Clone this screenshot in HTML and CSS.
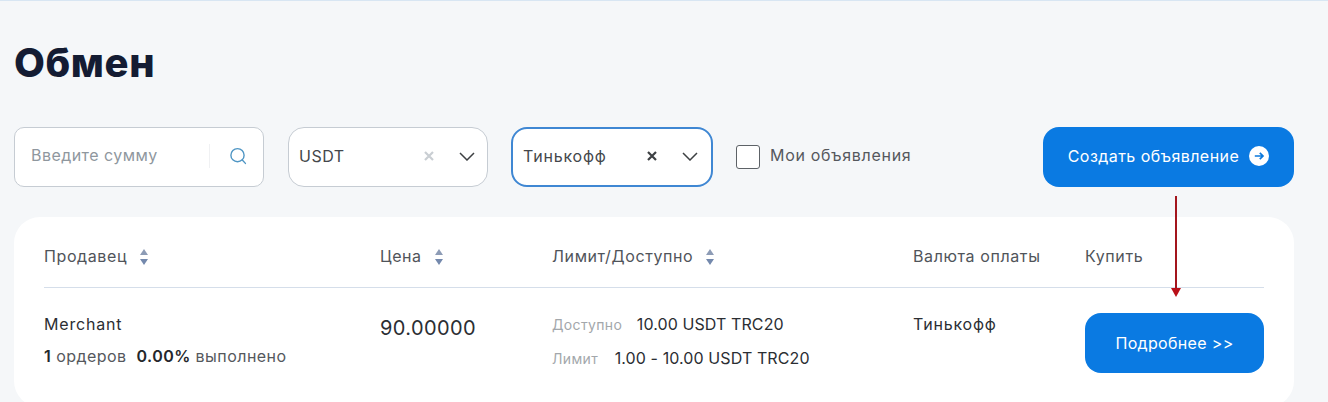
FILE: index.html
```html
<!DOCTYPE html>
<html lang="ru">
<head>
    <meta charset="UTF-8">
    <meta name="viewport" content="width=device-width, initial-scale=1.0">
    <title>Обмен</title>
    <link rel="stylesheet" href="styles.css">
</head>
<body>
    <main class="page">
        <h1 class="title">Обмен</h1>

        <!-- Фильтры -->
        <div class="filters">
            <div class="field field-search">
                <span class="placeholder">Введите сумму</span>
                <span class="search-sep"></span>
                <svg class="search-icon" width="18" height="18" viewBox="0 0 18 18" fill="none" stroke="#4f96c4" stroke-width="1.4">
                    <circle cx="8.5" cy="8.2" r="6.6"/>
                    <path d="M13.3 13 16.4 16.4" stroke-linecap="round"/>
                </svg>
            </div>

            <div class="field field-select field-usdt">
                <span class="select-value">USDT</span>
                <svg class="clear-icon" width="10" height="10" viewBox="0 0 10 10" stroke="#c9ced3" stroke-width="2.2">
                    <path d="M1 1 9 9M9 1 1 9"/>
                </svg>
                <svg class="chevron" width="16" height="9" viewBox="0 0 16 9" fill="none" stroke="#3d4043" stroke-width="1.5">
                    <path d="M1 1 8 8 15 1"/>
                </svg>
            </div>

            <div class="field field-select field-bank">
                <span class="select-value">Тинькофф</span>
                <svg class="clear-icon" width="10" height="10" viewBox="0 0 10 10" stroke="#3d4043" stroke-width="2.2">
                    <path d="M1 1 9 9M9 1 1 9"/>
                </svg>
                <svg class="chevron" width="16" height="9" viewBox="0 0 16 9" fill="none" stroke="#3d4043" stroke-width="1.5">
                    <path d="M1 1 8 8 15 1"/>
                </svg>
            </div>

            <label class="check">
                <span class="check-box"></span>
                <span class="check-label">Мои объявления</span>
            </label>

            <button class="btn btn-create">
                Создать объявление
                <svg width="20" height="20" viewBox="0 0 20 20">
                    <circle cx="10" cy="10" r="10" fill="#fff"/>
                    <path d="M5.8 10H14M10.8 6.8 14 10 10.8 13.2" fill="none" stroke="#0b78dc" stroke-width="1.7"/>
                </svg>
            </button>
        </div>

        <!-- Таблица объявлений -->
        <section class="card">
            <div class="row row-head">
                <div class="cell">Продавец <span class="sort"></span></div>
                <div class="cell">Цена <span class="sort"></span></div>
                <div class="cell">Лимит/Доступно <span class="sort"></span></div>
                <div class="cell">Валюта оплаты</div>
                <div class="cell">Купить</div>
            </div>
            <div class="row row-body">
                <div class="cell seller">
                    <div class="seller-name">Merchant</div>
                    <div class="seller-stats"><b>1</b> ордеров <b class="stats-gap">0.00%</b> выполнено</div>
                </div>
                <div class="cell price">90.00000</div>
                <div class="cell limits">
                    <div class="limit-line"><span class="limit-label">Доступно</span> 10.00 USDT TRC20</div>
                    <div class="limit-line"><span class="limit-label">Лимит</span> 1.00 - 10.00 USDT TRC20</div>
                </div>
                <div class="cell bank">Тинькофф</div>
                <div class="cell">
                    <button class="btn btn-more">Подробнее &gt;&gt;</button>
                </div>
            </div>
        </section>

        <!-- Красная стрелка поверх страницы -->
        <svg class="arrow" width="12" height="102" viewBox="0 0 12 102">
            <path d="M6 0V93" stroke="#a3151d" stroke-width="2"/>
            <path d="M1 92H11L6 101Z" fill="#b90f18"/>
        </svg>
    </main>
</body>
</html>
```

FILE: styles.css
```css
* {
    box-sizing: border-box;
}

html, body {
    height: 100%;
}

body {
    margin: 0;
    overflow: hidden;
    background-color: #f5f7f9;
    border-top: 1px solid #d8e6f3;
    font-family: Inter, "Open Sans", sans-serif;
    color: #2b2e33;
}

.page {
    position: relative;
    padding: 0 34px 0 14px;
}

.title {
    margin: 0;
    padding-top: 39px;
    height: 126px;
    font-size: 40px;
    line-height: 46px;
    font-weight: 800;
    letter-spacing: 0.6px;
    color: #141c33;
}

.filters {
    display: flex;
    align-items: center;
    height: 60px;
}

.field {
    display: flex;
    align-items: center;
    height: 60px;
    padding-bottom: 2px;
    background: #fff;
    border: 1px solid #c6ccd3;
}

.field-search {
    width: 250px;
    padding: 0 16px 2px 16px;
    border-radius: 10px;
}

.placeholder {
    flex: 1;
    padding-bottom: 2px;
    font-size: 16px;
    letter-spacing: 0.45px;
    color: #8f979e;
}

.search-sep {
    width: 1px;
    height: 24px;
    margin-right: 19px;
    background: #f0f1f3;
}

.field-select {
    border-radius: 16px;
    font-size: 16px;
    color: #44474b;
}

.field-usdt {
    width: 200px;
    margin-left: 24px;
    padding: 0 12px 2px 10px;
}

.field-bank {
    width: 202px;
    margin-left: 23px;
    padding: 0 13px 2px 10px;
    border: 2px solid #3f87d3;
}

.field-usdt .select-value {
    letter-spacing: 0.5px;
}

.field-bank .select-value {
    letter-spacing: 0.8px;
}

.select-value {
    flex: 1;
}

.clear-icon {
    margin-right: 25px;
}

.check {
    display: flex;
    align-items: center;
    margin-left: 23px;
    font-size: 16px;
    letter-spacing: 0.7px;
    color: #55585d;
}

.check-label {
    padding-bottom: 4px;
}

.check-box {
    width: 24px;
    height: 24px;
    margin-right: 10px;
    background: #fff;
    border: 1px solid #5d6267;
    border-radius: 3px;
}

.btn {
    border: none;
    border-radius: 16px;
    background-color: #0a7ae2;
    color: #fff;
    font-family: inherit;
    font-size: 16px;
    cursor: pointer;
}

.btn-create {
    display: flex;
    align-items: center;
    justify-content: center;
    gap: 10px;
    width: 251px;
    height: 60px;
    margin-left: auto;
    padding-bottom: 4px;
    letter-spacing: 0.45px;
}

.card {
    width: 1280px;
    height: 190px;
    margin-top: 30px;
    padding: 0 30px;
    background: #fff;
    border-radius: 26px;
}

.row {
    display: grid;
    grid-template-columns: 336px 172px 361px 172px 179px;
}

.row-head {
    align-items: center;
    height: 71px;
    padding-top: 8px;
    border-bottom: 1px solid #d5deea;
    font-size: 16px;
    letter-spacing: 0.6px;
    color: #50545a;
}

.sort {
    display: inline-block;
    position: relative;
    width: 9px;
    height: 16px;
    margin-left: 8px;
    vertical-align: -3px;
}

.sort::before,
.sort::after {
    content: "";
    position: absolute;
    left: 0;
    border-left: 4.5px solid transparent;
    border-right: 4.5px solid transparent;
}

.sort::before {
    top: 0;
    border-bottom: 6px solid #8d9cb6;
}

.sort::after {
    bottom: 0;
    border-top: 6px solid #7489ad;
}

.row-body {
    padding-top: 24px;
    font-size: 16px;
    color: #2b2e33;
}

.seller-name {
    line-height: 24px;
    letter-spacing: 0.8px;
}

.seller-stats {
    margin-top: 8px;
    line-height: 24px;
    letter-spacing: 0.45px;
    color: #55585d;
}

.seller-stats b {
    font-weight: 600;
    color: #24272b;
}

.stats-gap {
    margin-left: 5px;
}

.price {
    padding-top: 3px;
    font-size: 20px;
    line-height: 26px;
    letter-spacing: 0.4px;
}

.limit-line {
    line-height: 24px;
    letter-spacing: 0.1px;
}

.limit-line + .limit-line {
    margin-top: 9px;
}

.limit-label {
    margin-right: 10px;
    font-size: 14px;
    letter-spacing: 0.35px;
    color: #a3a7ab;
}

.limit-line + .limit-line .limit-label {
    margin-right: 12px;
}

.bank {
    line-height: 24px;
    letter-spacing: 0.8px;
}

.btn-more {
    display: block;
    width: 179px;
    height: 60px;
    margin-top: 1px;
    padding-bottom: 2px;
    letter-spacing: 0.33px;
}

.arrow {
    position: absolute;
    left: 1170px;
    top: 195px;
}
```
